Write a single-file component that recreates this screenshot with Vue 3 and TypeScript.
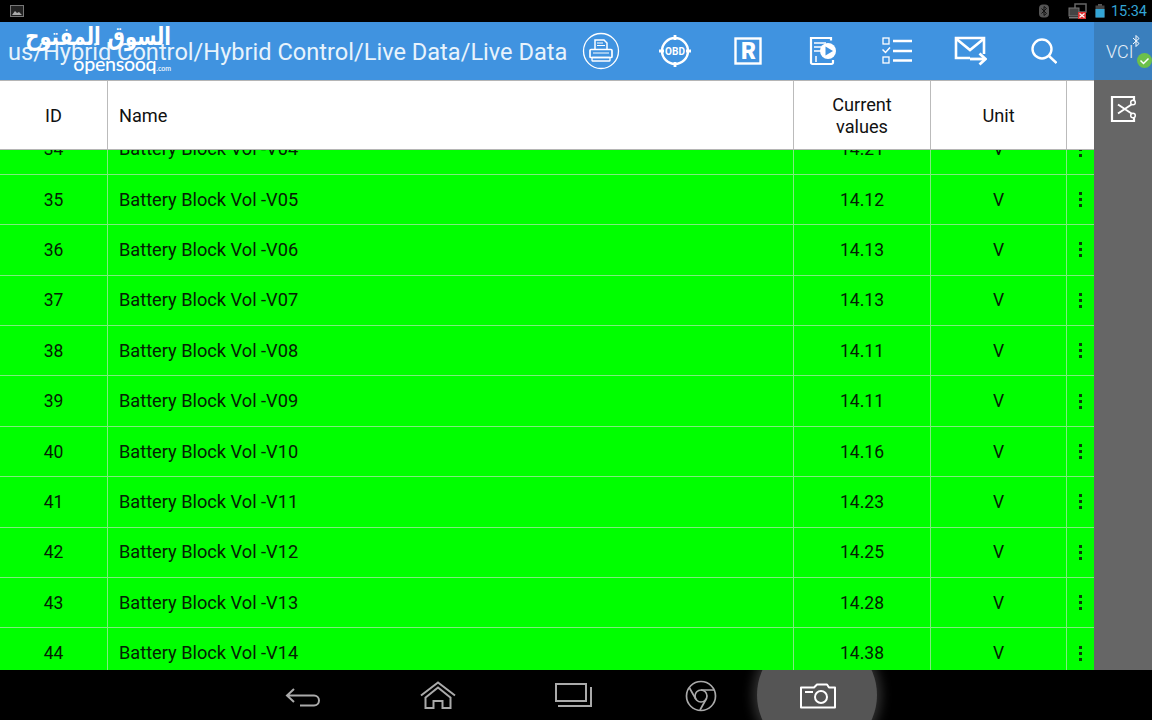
<script setup lang="ts">
interface Row { id: number; name: string; value: string }
const values: string[] = ['14.21','14.12','14.13','14.13','14.11','14.11','14.16','14.23','14.25','14.28','14.38']
const rows: Row[] = values.map((value, i) => ({
  id: 34 + i,
  name: `Battery Block Vol -V${String(4 + i).padStart(2, '0')}`,
  value,
}))
</script>

<template>
  <div class="screen">
    <div class="status">
      <svg class="st-pic" width="16" height="14" viewBox="0 0 16 14"><rect x="1.5" y="1.5" width="13" height="11" fill="#222" stroke="#777"/><path d="M3 11l3-4 2 2 2-1 3 3z" fill="#aaa"/></svg>
      <div class="status-right">
        <svg class="st-bt" width="12" height="14" viewBox="0 0 12 14"><rect x="1" y="0.5" width="10" height="13" rx="4" fill="#555"/><path d="M3.5 4.5l5 5-2.500 2v-9l2.500 2-5 5" fill="none" stroke="#111" stroke-width="1"/></svg>
        <svg class="st-net" width="20" height="16" viewBox="0 0 20 16"><rect x="7" y="1" width="11" height="8" fill="none" stroke="#666" stroke-width="1.500"/><rect x="1" y="5" width="10" height="8" fill="#444" stroke="#777"/><rect x="1" y="14" width="10" height="1.500" fill="#777"/><rect x="10" y="9" width="8" height="7" fill="#d33"/><path d="M11.500 10.500l5 4m0-4l-5 4" stroke="#fff" stroke-width="1.200"/></svg>
        <svg class="st-bat" width="10" height="14" viewBox="0 0 10 14"><rect x="3" y="0" width="4" height="2" fill="#555"/><rect x="0.500" y="1.500" width="9" height="12" fill="#444"/><rect x="0.500" y="5" width="9" height="8.500" fill="#33a5d5"/></svg>
        <span class="time">15:34</span>
      </div>
    </div>

    <header class="appbar">
      <div class="title">us/Hybrid Control/Hybrid Control/Live Data/Live Data</div>
      <div class="tools">
        <svg class="ic i-print" width="38" height="38" viewBox="0 0 38 38" fill="none" stroke="#fff">
          <circle cx="19" cy="19" r="17.500" stroke-width="1.300"/>
          <path d="M13 17V8h9l3 3v6" stroke-width="1.500"/>
          <path d="M15 11h6M15 13.500h8" stroke-width="1"/>
          <rect x="8" y="17.500" width="22" height="8" rx="1" stroke-width="1.700"/>
          <rect x="10" y="25.500" width="18" height="3.500" rx="0.500" stroke-width="1.300"/>
          <path d="M11 21h16" stroke-width="1"/>
        </svg>
        <svg class="ic i-obd" width="34" height="34" viewBox="0 0 34 34" fill="none" stroke="#fff">
          <circle cx="17" cy="17" r="13" stroke-width="2.400"/>
          <path d="M17 1v5M17 28v5M1 17h5M28 17h5" stroke-width="2.800"/>
          <text x="17" y="20.500" class="obd">OBD</text>
        </svg>
        <svg class="ic i-r" width="28" height="28" viewBox="0 0 28 28">
          <rect x="1.500" y="1.500" width="25" height="25" fill="none" stroke="#fff" stroke-width="2.400"/>
          <text x="14.500" y="22" class="rr">R</text>
        </svg>
        <svg class="ic i-vid" width="30" height="30" viewBox="0 0 30 30" fill="none" stroke="#fff">
          <path d="M23 4.500V2H3v24.500a1.500 1.500 0 0 0 1.500 1.500h19A1.500 1.500 0 0 0 25 26.500V24" stroke-width="2.200"/>
          <path d="M6 7h12M6 11h9M6 15h7M8 20v6" stroke-width="1.500"/>
          <circle cx="20" cy="15" r="8" fill="#fff" stroke="none"/>
          <path d="M17.500 10.500l7.500 4.500-7.500 4.500z" fill="#4093e0" stroke="none"/>
        </svg>
        <svg class="ic i-list" width="30" height="28" viewBox="0 0 30 28" fill="none" stroke="#fff">
          <rect x="1" y="1" width="6" height="6" stroke-width="1.300"/>
          <path d="M0.500 12.500l3 3 4.500-5" stroke-width="1.500"/>
          <rect x="1" y="20" width="6" height="6" stroke-width="1.300"/>
          <path d="M11 4h19M11 14h19M11 23.500h19" stroke-width="2.400"/>
        </svg>
        <svg class="ic i-mail" width="33" height="30" viewBox="0 0 33 30" fill="none" stroke="#fff">
          <path d="M30 18V2H2v20h14" stroke-width="2.600"/>
          <path d="M2.500 3L16 14 29.500 3" stroke-width="2.600"/>
          <path d="M16 23h14" stroke-width="2.800"/>
          <path d="M25.500 17.500l6 5.500-6 5.500" stroke-width="2.800"/>
        </svg>
        <svg class="ic i-search" width="26" height="26" viewBox="0 0 26 26" fill="none" stroke="#fff" stroke-width="2.400">
          <circle cx="11" cy="11" r="9.500"/>
          <path d="M18 18l7.500 7"/>
        </svg>
      </div>
      <div class="vci">
        <span class="vci-text">VCI</span>
        <svg class="vci-bt" width="9" height="14" viewBox="0 0 9 14" fill="none" stroke="#fff" stroke-width="1"><path d="M1 4l6 5.500-3 3V1.500l3 3-6 5.500"/></svg>
        <svg class="vci-ok" width="15" height="15" viewBox="0 0 15 15"><circle cx="7.500" cy="7.500" r="7.500" fill="#6cc04a"/><path d="M3.500 7.500l3 3 5-5" fill="none" stroke="#fff" stroke-width="1.500"/></svg>
      </div>
    </header>

    <div class="main">
      <section class="table">
        <div class="thead">
          <div class="c c-id">ID</div>
          <div class="c c-name">Name</div>
          <div class="c c-val">Current<br />values</div>
          <div class="c c-unit">Unit</div>
          <div class="c c-more"></div>
        </div>
        <div class="tbody">
          <div class="rows">
            <div v-for="r in rows" :key="r.id" class="row">
              <div class="c c-id">{{ r.id }}</div>
              <div class="c c-name">{{ r.name }}</div>
              <div class="c c-val">{{ r.value }}</div>
              <div class="c c-unit">V</div>
              <div class="c c-more"><span class="dots"><i></i><i></i><i></i></span></div>
            </div>
          </div>
        </div>
      </section>
      <aside class="side">
        <svg width="28" height="28" viewBox="0 0 28 28" fill="none" stroke="#fff">
          <path d="M25 6V2H3v24h22v-4" stroke-width="2.200"/>
          <path d="M9 9.500l13.500 9M9 18.500l13.500-9" stroke-width="2"/>
          <circle cx="24" cy="7.500" r="2.300" stroke-width="1.500"/>
          <circle cx="24" cy="20.500" r="2.300" stroke-width="1.500"/>
        </svg>
      </aside>
    </div>

    <nav class="nav">
      <svg class="n n-back" width="36" height="20" viewBox="0 0 36 20" fill="none" stroke="#aaa" stroke-width="2">
        <path d="M9 2L2 8.500 9 15M2 8.500h27a5 5 0 0 1 0 10H15"/>
      </svg>
      <svg class="n n-home" width="36" height="28" viewBox="0 0 36 28" fill="none" stroke="#aaa" stroke-width="2">
        <path d="M1 14.500L18 1.500l17 13"/>
        <path d="M5 17L18 6.500 31 17M5.500 16v11h8v-7h9v7h8V16"/>
      </svg>
      <svg class="n n-rec" width="37" height="24" viewBox="0 0 37 24" fill="none" stroke="#aaa" stroke-width="2">
        <rect x="1" y="1" width="30" height="17"/>
        <path d="M36 4v19H3" />
      </svg>
      <svg class="n n-chrome" width="32" height="32" viewBox="0 0 32 32" fill="none" stroke="#aaa" stroke-width="1.700">
        <circle cx="16" cy="16" r="14.500"/>
        <circle cx="16" cy="16" r="6"/>
        <path d="M16 10h13M10.800 19L4.500 8M21.200 19L15 30"/>
      </svg>
      <div class="cam">
        <span class="glow"></span>
        <svg width="38" height="28" viewBox="0 0 38 28" fill="none" stroke="#fff" stroke-width="2">
          <path d="M2 6.500h13l3-3h10l2 3h6v20H2z" stroke-linejoin="round"/>
          <circle cx="22" cy="16" r="6"/>
          <path d="M6 11h8"/>
        </svg>
      </div>
    </nav>

    <div class="mark">
      <div class="mark-ar">السوق المفتوح</div>
      <div class="mark-en">opensooq<small>.com</small></div>
    </div>
  </div>
</template>

<style scoped>
.screen {
  position: relative;
  width: 1152px;
  height: 720px;
  overflow: hidden;
  display: flex;
  flex-direction: column;
  background: #000;
  font-family: Roboto, "Liberation Sans", sans-serif;
}
.status {
  height: 22px;
  flex: none;
  box-sizing: border-box;
  display: flex;
  align-items: center;
  justify-content: space-between;
  padding: 0 5px 0 9px;
  background: #000;
}
.status-right { display: flex; align-items: center; }
.st-bt { margin-right: 18px; }
.st-net { margin-right: 7px; }
.st-bat { margin-right: 6px; }
.time { color: #33a5d5; font-size: 14.500px; }

.appbar {
  height: 58px;
  flex: none;
  display: flex;
  align-items: center;
  background: #4093e0;
}
.title {
  width: 582px;
  padding: 2px 0 0 8px;
  box-sizing: border-box;
  color: #e8f3fc;
  font-size: 23.600px;
  white-space: nowrap;
  overflow: hidden;
}
.tools { width: 512px; height: 100%; display: flex; align-items: center; }
.ic { flex: none; }
.i-print { margin-left: 0; }
.i-obd { margin-left: 38px; }
.i-r { margin-left: 42px; }
.i-vid { margin-left: 46px; }
.i-list { margin-left: 44px; }
.i-mail { margin-left: 42px; }
.i-search { margin-left: 44px; }
.obd {
  fill: #fff;
  stroke: none;
  font-size: 10px;
  font-weight: 700;
  text-anchor: middle;
  font-family: Roboto, sans-serif;
}
.rr {
  fill: #fff;
  font-size: 23px;
  font-weight: 900;
  text-anchor: middle;
  font-family: Roboto, sans-serif;
}
.vci {
  position: relative;
  width: 58px;
  height: 100%;
  background: #3a7fbd;
}
.vci-text {
  position: absolute;
  left: 12px;
  top: 19px;
  color: #e6f0f8;
  font-size: 18px;
  font-weight: 300;
}
.vci-bt { position: absolute; left: 38px; top: 12px; }
.vci-ok { position: absolute; left: 43px; top: 31px; }

.main { flex: 1; min-height: 0; display: flex; }
.table { width: 1094px; display: flex; flex-direction: column; }
.thead {
  height: 70px;
  flex: none;
  box-sizing: border-box;
  display: flex;
  background: #fff;
  border-top: 1px solid #b5b5b5;
  border-bottom: 1px solid #b5b5b5;
  color: #111;
}
.c {
  display: flex;
  align-items: center;
  justify-content: center;
  text-align: center;
  box-sizing: border-box;
  font-size: 17.500px;
  line-height: 22px;
  border-right: 1px solid #bbb;
}
.thead .c { font-size: 18.200px; padding-top: 2px; }
.c-id { width: 108px; }
.c-name { width: 686px; justify-content: flex-start; padding-left: 11px; }
.row .c-name { font-size: 18.200px; }
.c-val { width: 137px; }
.c-unit { width: 136px; }
.c-more { width: 27px; border-right: 0; }
.tbody { flex: 1; min-height: 0; overflow: hidden; background: #00ff00; }
.rows { margin-top: -25.500px; }
.row {
  height: 50.400px;
  box-sizing: border-box;
  display: flex;
  border-bottom: 1px solid #80ea80;
  color: #052005;
}
.row .c { border-right-color: #80ea80; }
.row .c-more { border-right: 0; }
.dots { display: flex; flex-direction: column; gap: 3px; }
.dots i { display: block; width: 3px; height: 3px; background: #0a3a0a; }
.side {
  width: 58px;
  background: #666;
  display: flex;
  justify-content: center;
  align-items: flex-start;
  padding-top: 15px;
  box-sizing: border-box;
}

.nav {
  height: 50px;
  flex: none;
  position: relative;
  overflow: hidden;
  display: flex;
  align-items: center;
  padding-left: 285px;
  background: #000;
}
.n { flex: none; }
.n-back { margin-top: 4px; }
.n-home { margin-left: 99px; }
.n-rec { margin-left: 99px; }
.n-chrome { margin-left: 93px; margin-top: 2px; }
.cam {
  position: relative;
  margin-left: 82px;
  width: 38px;
  height: 28px;
}
.cam svg { position: relative; display: block; }
.glow {
  position: absolute;
  left: -42px;
  top: -46px;
  width: 120px;
  height: 120px;
  border-radius: 50%;
  background: #555;
  box-shadow: 0 0 12px 4px #333;
}

.mark {
  position: absolute;
  left: 24px;
  top: 22px;
  width: 147px;
  color: #fff;
  text-align: right;
  pointer-events: none;
}
.mark-ar {
  font-family: "DejaVu Sans", sans-serif;
  font-size: 19.500px;
  font-weight: 700;
  line-height: 30px;
  height: 30px;
  white-space: nowrap;
  text-align: right;
  transform: scaleY(1.3);
}
.mark-en {
  font-family: Lato, "Open Sans", sans-serif;
  font-size: 19.600px;
  line-height: 20px;
  margin-top: 2px;
  font-weight: 500;
  letter-spacing: -0.300px;
}
.mark-en small { font-size: 7px; letter-spacing: 0; }
</style>

<style>
html, body { margin: 0; padding: 0; background: #000; }
</style>
